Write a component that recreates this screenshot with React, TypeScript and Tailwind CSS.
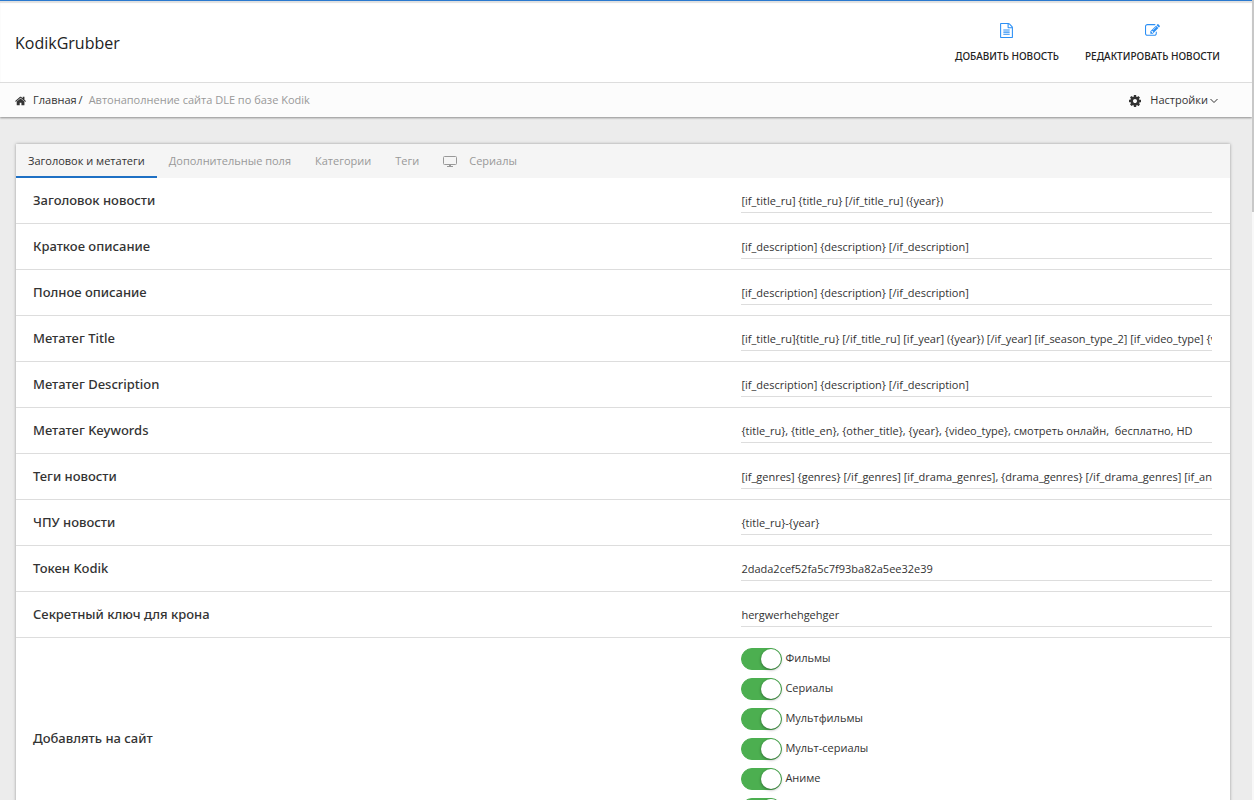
import { useState, type ReactNode } from "react";

const HOME =
  "M1408 992v480q0 26-19 45t-45 19h-384v-384h-256v384h-384q-26 0-45-19t-19-45v-480q0-1 .5-3t.5-3l575-474 575 474q1 2 1 6zm223-69l-62 74q-8 9-21 11h-3q-13 0-21-7l-692-577-692 577q-12 8-24 7-13-2-21-11l-62-74q-8-10-7-23.5t11-21.5l719-599q32-26 76-26t76 26l244 204v-195q0-14 9-23t23-9h192q14 0 23 9t9 23v408l219 182q10 8 11 21.5t-7 23.5z";
const FILE_TEXT =
  "M1596 380q28 28 48 76t20 88v1152q0 40-28 68t-68 28h-1344q-40 0-68-28t-28-68v-1600q0-40 28-68t68-28h896q40 0 88 20t76 48zm-444-244v376h376q-10-29-22-41l-313-313q-12-12-41-22zm384 1528v-1024h-416q-40 0-68-28t-28-68v-416h-768v1536h1280zm-1024-864q0-14 9-23t23-9h704q14 0 23 9t9 23v64q0 14-9 23t-23 9h-704q-14 0-23-9t-9-23v-64zm736 224q14 0 23 9t9 23v64q0 14-9 23t-23 9h-704q-14 0-23-9t-9-23v-64q0-14 9-23t23-9h704zm0 256q14 0 23 9t9 23v64q0 14-9 23t-23 9h-704q-14 0-23-9t-9-23v-64q0-14 9-23t23-9h704z";
const PENCIL_SQUARE =
  "M888 1184l116-116-152-152-116 116v56h96v96h56zm440-720q-16-16-33 1l-350 350q-17 17-1 33t33-1l350-350q17-17 1-33zm80 594v190q0 119-84.5 203.5t-203.5 84.5h-832q-119 0-203.5-84.5t-84.5-203.5v-832q0-119 84.5-203.5t203.5-84.5h832q63 0 117 25 15 7 18 23 3 17-9 29l-49 49q-14 14-32 8-23-6-45-6h-832q-66 0-113 47t-47 113v832q0 66 47 113t113 47h832q66 0 113-47t47-113v-126q0-13 9-22l64-64q15-15 35-7t20 29zm-96-738l288 288-672 672h-288v-288zm444 132l-92 92-288-288 92-92q28-28 68-28t68 28l152 152q28 28 28 68t-28 68z";
const COG =
  "M1152 896q0-106-75-181t-181-75-181 75-75 181 75 181 181 75 181-75 75-181zm512-109v222q0 12-8 23t-20 13l-185 28q-19 54-39 91 35 50 107 138 10 12 10 25t-9 23q-27 37-99 108t-94 71q-12 0-26-9l-138-108q-44 23-91 38-16 136-29 186-7 28-36 28h-222q-14 0-24.5-8.5t-11.5-21.5l-28-184q-49-16-90-37l-141 107q-10 9-25 9-14 0-25-11-126-114-165-168-7-10-7-23 0-12 8-23 15-21 51-66.5t54-70.5q-27-50-41-99l-183-27q-13-2-21-12.5t-8-23.5v-222q0-12 8-23t19-13l186-28q14-46 39-92-40-57-107-138-10-12-10-24 0-10 9-23 26-36 98.5-107.5t94.5-71.5q13 0 26 10l138 107q44-23 91-38 16-136 29-186 7-28 36-28h222q14 0 24.5 8.5t11.5 21.5l28 184q49 16 90 37l142-107q9-9 24-9 13 0 25 10 129 119 165 170 7 8 7 22 0 12-8 23-15 21-51 66.5t-54 70.5q26 50 41 98l183 28q13 2 21 12.5t8 23.5z";

interface Field {
  name: string;
  label: string;
  value: string;
}

const fields: Field[] = [
  { name: "title", label: "Заголовок новости", value: "[if_title_ru] {title_ru} [/if_title_ru] ({year})" },
  { name: "short", label: "Краткое описание", value: "[if_description] {description} [/if_description]" },
  { name: "full", label: "Полное описание", value: "[if_description] {description} [/if_description]" },
  {
    name: "meta_title",
    label: "Метатег Title",
    value:
      "[if_title_ru]{title_ru} [/if_title_ru] [if_year] ({year}) [/if_year] [if_season_type_2] [if_video_type] {video_type} [/if_video_type]",
  },
  { name: "meta_descr", label: "Метатег Description", value: "[if_description] {description} [/if_description]" },
  {
    name: "meta_keywords",
    label: "Метатег Keywords",
    value: "{title_ru}, {title_en}, {other_title}, {year}, {video_type}, смотреть онлайн,  бесплатно, HD",
  },
  {
    name: "tags",
    label: "Теги новости",
    value:
      "[if_genres] {genres} [/if_genres] [if_drama_genres], {drama_genres} [/if_drama_genres] [if_anime_genres], {anime_genres} [/if_anime_genres]",
  },
  { name: "alt_name", label: "ЧПУ новости", value: "{title_ru}-{year}" },
  { name: "token", label: "Токен Kodik", value: "2dada2cef52fa5c7f93ba82a5ee32e39" },
  { name: "cron_key", label: "Секретный ключ для крона", value: "hergwerhehgehger" },
];

const kinds = ["Фильмы", "Сериалы", "Мультфильмы", "Мульт-сериалы", "Аниме", ""];

const tabs = ["Заголовок и метатеги", "Дополнительные поля", "Категории", "Теги", "Сериалы"];

function Icon({ d, className }: { d: string; className: string }) {
  return (
    <svg viewBox="0 0 1792 1792" className={`shrink-0 fill-current ${className}`} aria-hidden="true">
      <path d={d} />
    </svg>
  );
}

function Monitor() {
  return (
    <svg viewBox="0 0 14 12" className="h-3 w-3.5 shrink-0" fill="none" stroke="currentColor" aria-hidden="true">
      <rect x="0.5" y="1.5" width="13" height="8" rx="1" />
      <path d="M4 11.5h6M6 10.5h2" />
    </svg>
  );
}

function QuickLink({ icon, children }: { icon: ReactNode; children: ReactNode }) {
  return (
    <a
      href="#"
      className="flex flex-col items-center gap-2 font-['Noto_Sans',sans-serif] text-[10px] leading-5 font-medium text-[#222] uppercase"
    >
      <span className="text-[#2b8ff5]">{icon}</span>
      {children}
    </a>
  );
}

function Switch({ label }: { label: string }) {
  const [on, setOn] = useState(true);

  return (
    <label className="flex h-[30px] items-start gap-[3px] leading-5">
      <input type="checkbox" className="peer sr-only" checked={on} onChange={() => setOn(!on)} />
      <span className="flex h-[22px] w-[41px] shrink-0 justify-start rounded-full border border-[#dfdfdf] bg-white peer-checked:justify-end peer-checked:border-[#4caf50] peer-checked:bg-[#4caf50]">
        <span className="size-5 rounded-full bg-white shadow-[0_1px_3px_rgba(0,0,0,0.4)]" />
      </span>
      {label}
    </label>
  );
}

export default function App() {
  const [active, setActive] = useState(0);

  return (
    <div className="flex h-screen overflow-hidden bg-[#ececec] font-['Open_Sans',sans-serif] text-[11px] text-[#333]">
      <div className="min-w-0 flex-1">
        <header className="border-t border-[#2a79cf] bg-white shadow-[0_1px_2px_rgba(0,0,0,0.4)]">
          <div className="flex h-[82px] items-center justify-between border-b border-[#ddd] pt-0.5 pr-8 pl-[15px] shadow-[inset_0_2px_1px_rgba(0,0,0,0.12)]">
            <a href="#" className="text-base text-[#222]">
              KodikGrubber
            </a>
            <nav className="flex gap-[26px] pt-1">
              <QuickLink icon={<Icon d={FILE_TEXT} className="size-[15px]" />}>Добавить новость</QuickLink>
              <QuickLink icon={<Icon d={PENCIL_SQUARE} className="size-[15px]" />}>Редактировать новости</QuickLink>
            </nav>
          </div>
          <div className="flex h-[34px] items-center justify-between bg-[#fcfcfc] pt-px pr-[34px] pl-[15px]">
            <nav className="flex items-center">
              <a href="#" className="flex items-center gap-1.5">
                <Icon d={HOME} className="size-3" />
                Главная
              </a>
              <span className="px-0.5">/</span>
              <span className="pl-1 text-[#999]">Автонаполнение сайта DLE по базе Kodik</span>
            </nav>
            <button type="button" className="flex items-center">
              <Icon d={COG} className="mr-2 size-3.5" />
              Настройки
              <svg viewBox="0 0 8 8" className="ml-0.5 size-2" fill="none" stroke="currentColor" aria-hidden="true">
                <path d="M0.5 2L4 5.5L7.5 2" />
              </svg>
            </button>
          </div>
        </header>

        <main className="pt-[27px] pr-[22px] pl-4">
          <section className="bg-white shadow-[0_0_3px_rgba(0,0,0,0.35)]">
            <div className="flex h-[34px] bg-[#f5f5f5]" role="tablist">
              {tabs.map((tab, i) => (
                <button
                  key={tab}
                  type="button"
                  role="tab"
                  aria-selected={i === active}
                  onClick={() => setActive(i)}
                  className={
                    i === active
                      ? "flex h-[34px] items-center border-b-2 border-[#1e70c4] px-3 pt-0.5 text-[#333]"
                      : "flex h-[34px] items-center border-b-2 border-transparent px-3 pt-0.5 text-[#999]"
                  }
                >
                  {tab === "Сериалы" && (
                    <span className="mr-3">
                      <Monitor />
                    </span>
                  )}
                  {tab}
                </button>
              ))}
            </div>

            {fields.map((f) => (
              <div key={f.name} className="flex h-[46px] items-start border-b border-[#ddd] pr-[18px] pl-[17px]">
                <label
                  htmlFor={f.name}
                  className="w-3/5 pt-3 font-['Noto_Sans',sans-serif] text-[13px] leading-5 font-medium text-[#333]"
                >
                  {f.label}
                </label>
                <div className="w-2/5 pt-3 pl-px">
                  <input
                    id={f.name}
                    type="text"
                    defaultValue={f.value}
                    className="block h-[23px] w-full border-b border-[#ddd] bg-transparent pb-0.5 outline-none focus:border-[#1e88e5]"
                  />
                </div>
              </div>
            ))}

            <fieldset className="flex items-center pt-2.5 pr-[18px] pl-[17px]" aria-labelledby="kinds">
              <span
                id="kinds"
                className="w-3/5 font-['Noto_Sans',sans-serif] text-[13px] leading-5 font-medium text-[#333]"
              >
                Добавлять на сайт
              </span>
              <div className="w-2/5 pl-px">
                {kinds.map((kind) => (
                  <Switch key={kind} label={kind} />
                ))}
              </div>
            </fieldset>
          </section>
        </main>
      </div>

      {/* scroll track */}
      <div className="w-0.5 bg-[#f8f8f8]">
        <div className="h-[212px] bg-[#c8c8c8]" />
      </div>
    </div>
  );
}
